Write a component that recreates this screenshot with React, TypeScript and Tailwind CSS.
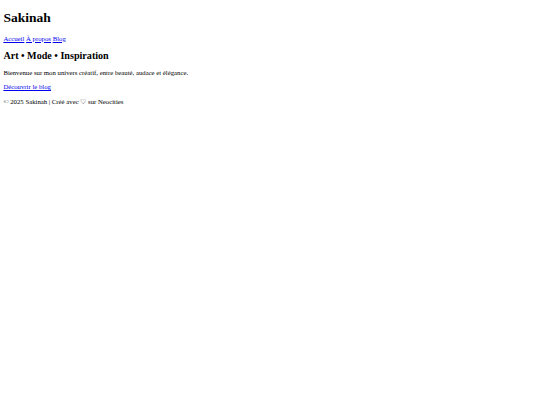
export default function App() {
  return (
    <div className="min-h-[405px] bg-white px-[3.375px] pt-[1px] pb-[3.375px] text-black font-['Liberation_Serif','Times_New_Roman',serif] text-[6.75px] leading-[normal] flow-root">
      <header>
        <h1 className="text-[13.5px] font-bold leading-[normal] mt-[9px] mb-[8.6px]">Sakinah</h1>
        <nav>
          <a href="#" className="text-[#0000ee] underline">Accueil</a>{" "}
          <a href="#" className="text-[#0000ee] underline">À propos</a>{" "}
          <a href="#" className="text-[#0000ee] underline">Blog</a>
        </nav>
      </header>
      <main>
        <h2 className="text-[10.125px] font-bold leading-[normal] my-[8.4px]">Art • Mode • Inspiration</h2>
        <p className="my-[6.75px]">Bienvenue sur mon univers créatif, entre beauté, audace et élégance.</p>
        <p className="my-[6.75px]">
          <a href="#" className="text-[#0000ee] underline">Découvrir le blog</a>
        </p>
      </main>
      <footer>
        <p className="mt-[7.75px] mb-[6.75px]">© 2025 Sakinah | Créé avec ♡ sur Neocities</p>
      </footer>
    </div>
  );
}
